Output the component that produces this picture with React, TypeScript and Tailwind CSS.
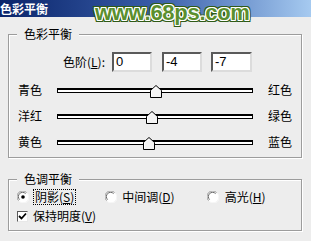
import React from "react";

const cjk = { fontFamily: '"Noto Sans CJK SC", "Noto Sans", sans-serif' };

function Thumb() {
  return (
    <svg width="12" height="13" viewBox="0 0 12 13" className="absolute top-[-5px]" style={{ marginLeft: -6 }}>
      <path d="M0.5 12.5 V5.5 L6 0.5 L11.5 5.5 V12.5 Z" fill="#f4f4f4" stroke="#000" strokeWidth="1" />
      <path d="M1.5 11.5 V6 L6 2" fill="none" stroke="#fff" strokeWidth="1" />
    </svg>
  );
}

function SliderRow({ left, right, pos }: { left: string; right: string; pos: number }) {
  return (
    <div className="flex items-center h-[26px]">
      <div className="w-[48px] pl-[9px] text-[12px] leading-[14px] text-black" style={cjk}>
        {left}
      </div>
      <div className="relative w-[196px] h-[5px] border border-black border-t-2 bg-white">
        <div className="absolute top-0 left-0" style={{ left: pos }}>
          <Thumb />
        </div>
      </div>
      <div className="ml-[15px] text-[12px] leading-[14px] text-black" style={cjk}>
        {right}
      </div>
    </div>
  );
}

function NumBox({ v, w }: { v: string; w: number }) {
  return (
    <div
      className="h-[20px] bg-white border-2 border-t-[#5a5a5a] border-l-[#5a5a5a] border-r-[#dcdcdc] border-b-[#dcdcdc] pl-[2px] text-[13px] leading-[16px] text-black"
      style={{ width: w, fontFamily: '"Liberation Sans", Arial, sans-serif' }}
    >
      {v}
    </div>
  );
}

function Radio({ checked }: { checked?: boolean }) {
  return (
    <svg width="12" height="12" viewBox="0 0 12 12">
      <circle cx="6" cy="6" r="5.5" fill="#ffffff" />
      <path d="M1.6 9.6 A5 5 0 0 1 9.6 1.6" fill="none" stroke="#9a9a9a" strokeWidth="1" />
      <path d="M2.6 8.6 A3.7 3.7 0 0 1 8.6 2.6" fill="none" stroke="#6a6a6a" strokeWidth="1" />
      <path d="M10.4 2.4 A5 5 0 0 1 2.4 10.4" fill="none" stroke="#f8f8f8" strokeWidth="1" />
      {checked && <circle cx="6" cy="6" r="1.8" fill="#000" />}
    </svg>
  );
}

export default function App() {
  return (
    <div className="relative w-[311px] h-[241px] overflow-hidden bg-[#ededed]" style={cjk}>
      {/* title bar */}
      <div className="h-[17px] bg-gradient-to-r from-[#0a246a] via-[#3a5da8] to-[#a6caf0] flex items-center">
        <span className="text-white font-bold text-[12px] leading-[14px]" style={cjk}>
          色彩平衡
        </span>
      </div>

      {/* group 1 */}
      <div className="relative ml-[8px] mt-[17px] w-[294px] h-[124px] border border-[#9c9c9c] shadow-[inset_1px_1px_0_#ffffff,1px_1px_0_#ffffff]">
        <div className="absolute left-[8px] top-[-8px] px-[7px] bg-[#ededed] text-[12px] leading-[14px] text-black">
          色彩平衡
        </div>
        <div className="flex items-center h-[20px] mt-[17px]">
          <div className="w-[103px] pr-[7px] text-right text-[12px] leading-[14px] text-black">
            色阶(<span className="underline">L</span>):
          </div>
          <NumBox v="0" w={40} />
          <div className="w-[10px]" />
          <NumBox v="-4" w={40} />
          <div className="w-[9px]" />
          <NumBox v="-7" w={41} />
        </div>
        <div className="h-[5px]" />
        <SliderRow left="青色" right="红色" pos={98} />
        <SliderRow left="洋红" right="绿色" pos={94} />
        <SliderRow left="黄色" right="蓝色" pos={91} />
      </div>

      {/* group 2 */}
      <div className="relative ml-[8px] mt-[21px] w-[294px] h-[52px] border border-[#9c9c9c] shadow-[inset_1px_1px_0_#ffffff,1px_1px_0_#ffffff]">
        <div className="absolute left-[8px] top-[-8px] px-[7px] bg-[#ededed] text-[12px] leading-[14px] text-black">
          色调平衡
        </div>
        <div className="flex items-center h-[18px] mt-[8px] text-[12px] leading-[14px] text-black">
          <div className="ml-[8px]">
            <Radio checked />
          </div>
          <div className="ml-[4px] px-[1px] border border-dotted border-black">
            阴影(<span className="underline">S</span>)
          </div>
          <div className="ml-[29px]">
            <Radio />
          </div>
          <div className="ml-[5px]">
            中间调(<span className="underline">D</span>)
          </div>
          <div className="ml-[32px]">
            <Radio />
          </div>
          <div className="ml-[6px]">
            高光(<span className="underline">H</span>)
          </div>
        </div>
        <div className="flex items-center h-[16px] mt-[2px] text-[12px] leading-[14px] text-black">
          <div className="ml-[8px] w-[11px] h-[11px] bg-white border border-t-[#5a5a5a] border-l-[#5a5a5a] border-r-[#e8e8e8] border-b-[#e8e8e8] flex items-center justify-center">
            <svg width="9" height="9" viewBox="0 0 9 9">
              <path d="M1 4 L3.5 6.5 L8 1.5" fill="none" stroke="#000" strokeWidth="1.8" />
            </svg>
          </div>
          <div className="ml-[5px]">
            保持明度(<span className="underline">V</span>)
          </div>
        </div>
      </div>

      {/* watermark */}
      <div
        className="absolute left-[95px] top-[-1px] text-[22px] leading-[28px] text-[#5b8f2f] font-bold tracking-[-0.3px]"
        style={{
          fontFamily: '"Liberation Sans", Arial, sans-serif',
          textShadow:
            "1px 0 0 #fff, -1px 0 0 #fff, 0 1px 0 #fff, 0 -1px 0 #fff, 1px 1px 0 #fff, -1px -1px 0 #fff, 1px -1px 0 #fff, -1px 1px 0 #fff, 2px 0 0 #2f5a16, -2px 0 0 #2f5a16, 0 2px 0 #2f5a16, 0 -2px 0 #2f5a16, 2px 2px 0 #2f5a16, -2px -2px 0 #2f5a16, 2px -2px 0 #2f5a16, -2px 2px 0 #2f5a16",
        }}
      >
        www.68ps.com
      </div>
    </div>
  );
}
